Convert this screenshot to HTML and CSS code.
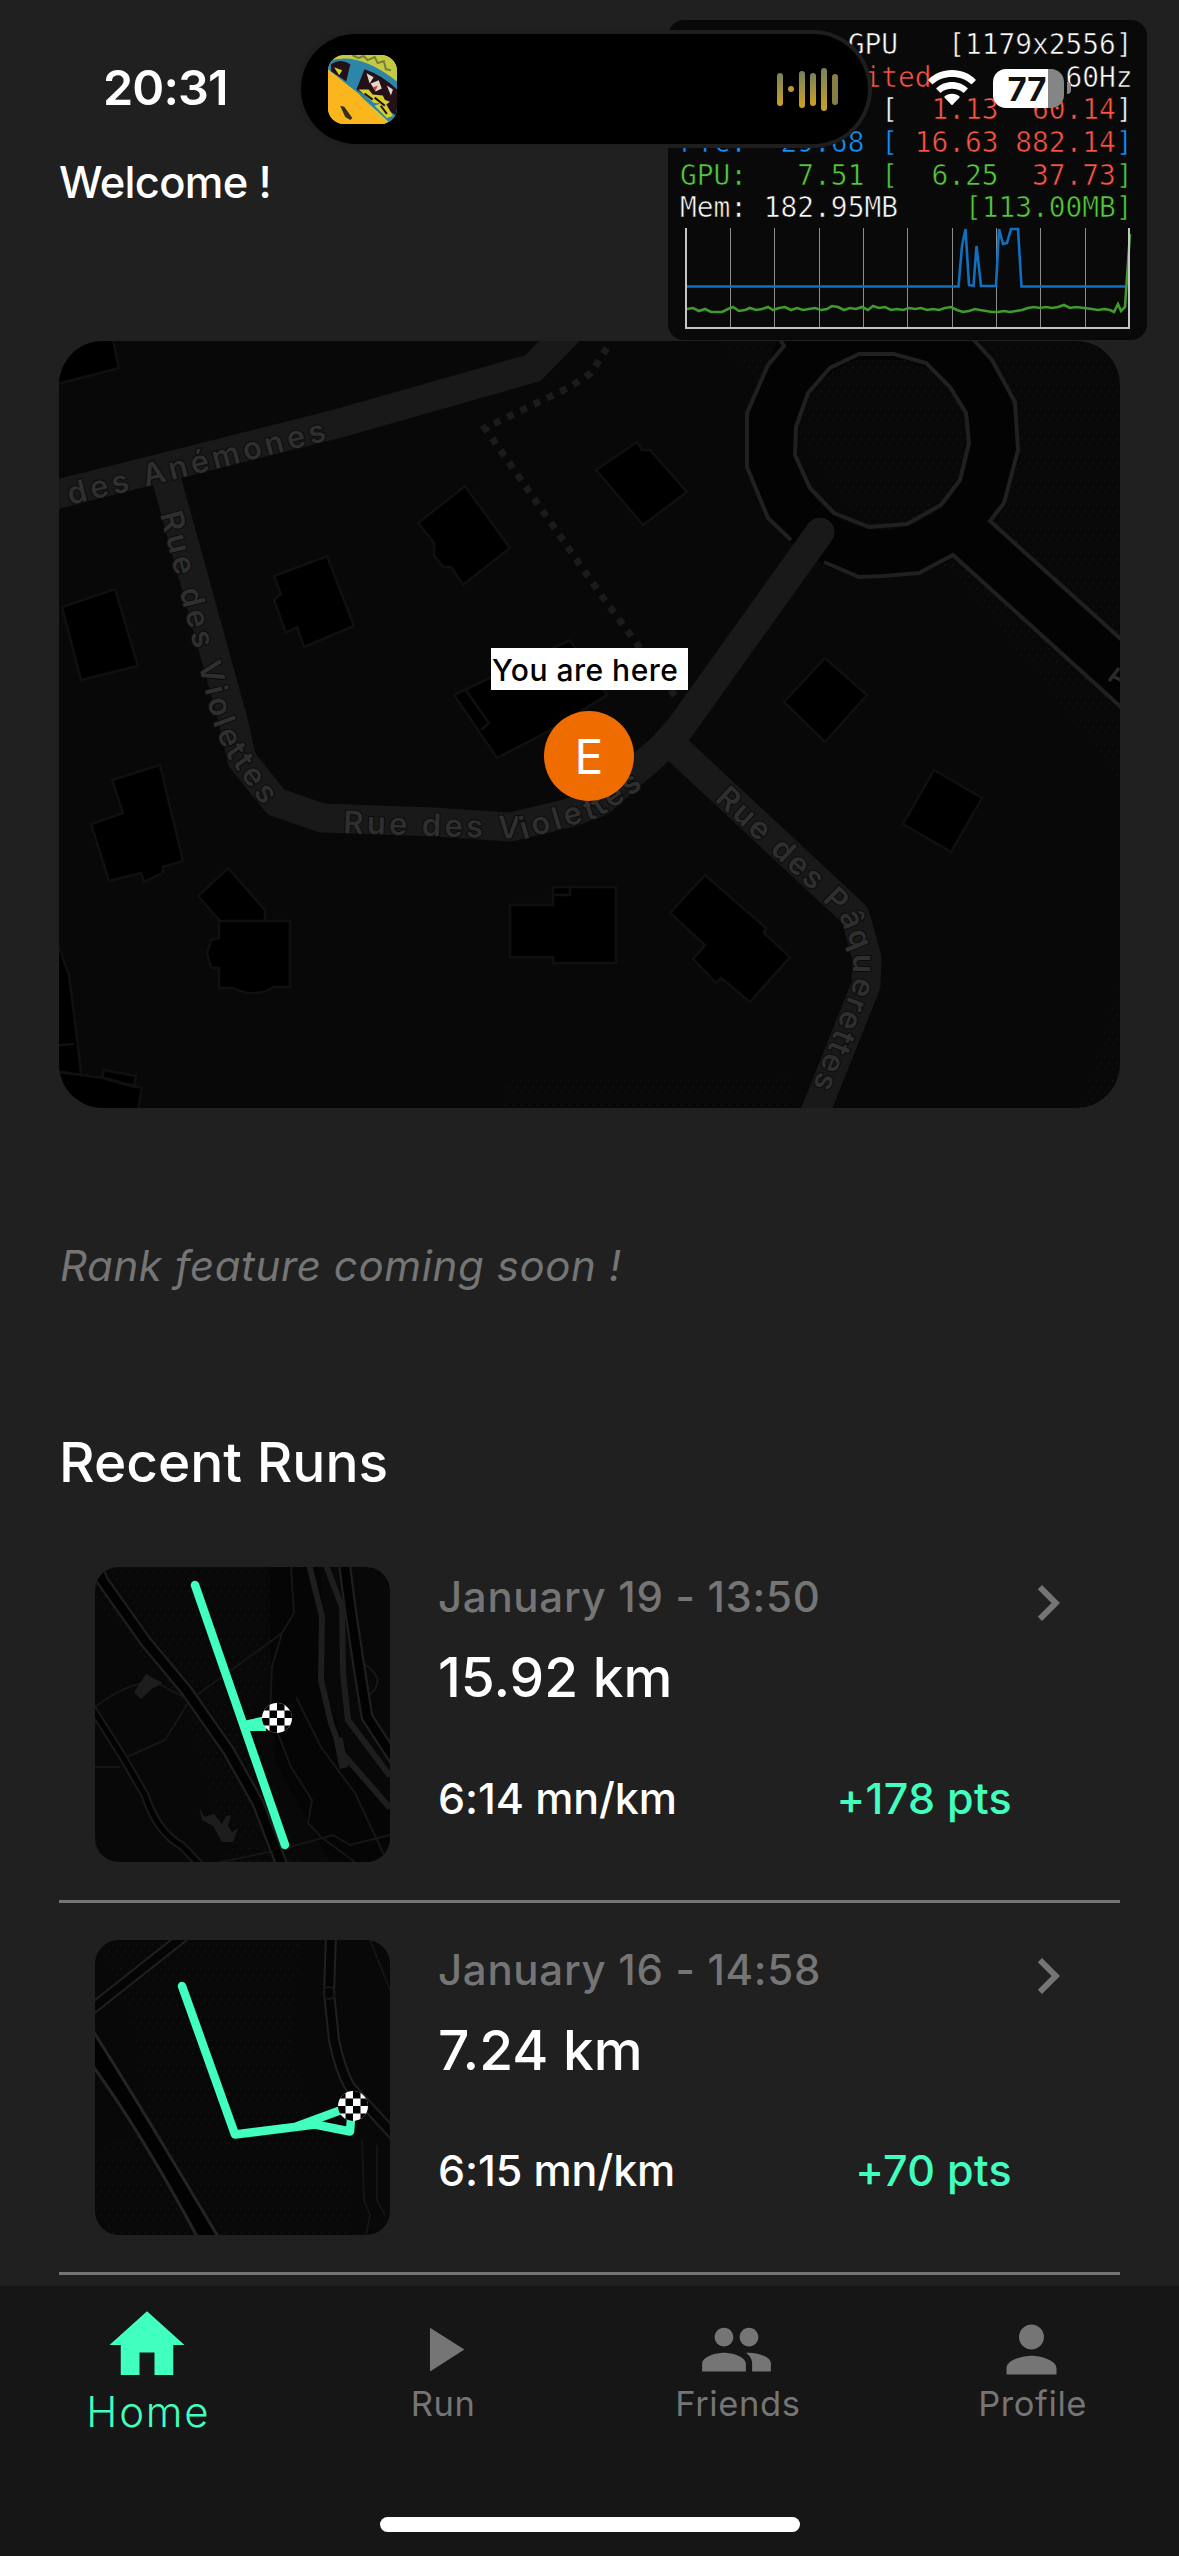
FILE: index.html
```
<!DOCTYPE html>
<html lang="en">
<head>
<meta charset="utf-8">
<title>Home</title>
<link rel="stylesheet" href="styles.css">
</head>
<body>
<svg class="defs" width="0" height="0" aria-hidden="true">
  <defs>
    <symbol id="finish" viewBox="0 0 30 30">
      <clipPath id="finish-clip"><circle cx="15" cy="15" r="15"/></clipPath>
      <g clip-path="url(#finish-clip)">
        <rect width="30" height="30" fill="#fff"/>
        <path fill="#000" d="M0 0h7.5v7.5H0zM15 0h7.5v7.5H15zM7.500 7.500h7.500v7.500H7.500zM22.500 7.500h7.500v7.500h-7.500zM0 15h7.500v7.500H0zM15 15h7.500v7.500H15zM7.500 22.500h7.500v7.500H7.500zM22.500 22.500h7.500v7.500h-7.500z"/>
      </g>
    </symbol>
    <pattern id="grain" width="8" height="12" patternUnits="userSpaceOnUse">
      <rect width="2" height="2" fill="#0e0e0e"/><rect x="4" y="6" width="2" height="2" fill="#0e0e0e"/>
    </pattern>
  </defs>
</svg>

<main class="content">
  <h1 class="welcome">Welcome !</h1>

  <section class="map">
    <svg class="map-art" viewBox="59 341 1061 767">
      <rect x="59" y="341" width="1061" height="767" fill="#080808"/>
      <path fill="url(#grain)" d="M720 341H1120V780L953 572L860 520L770 400ZM500 1108L510 1078L790 1075V1108ZM1120 980V1108H1080Z"/>
      <g fill="#000" stroke="#101010" stroke-width="2.500">
        <path d="M50 335L112 335L119 368L50 386Z"/>
        <path d="M62 607L115 589L138 666L81 680Z"/>
        <path d="M274 576L327 556L354 626L304 647L297 627L286 633L274 600L281 594Z"/>
        <path d="M418 523L465 486L510 548L463 585L451 567L443 567L434 555L434 543Z"/>
        <path d="M454 695L570 640L607 695L547 732L497 758Z"/>
        <path d="M465 689L489 723L481 730"/>
        <path d="M596 470L637 442L642 450L650 450L687 492L643 525Z"/>
        <path d="M784 702L825 658L867 695L825 742Z"/>
        <path d="M934 770L982 798L951 852L903 824Z"/>
        <path d="M705 875L766 928L764 933L790 957L750 1002L721 978L716 983L693 959L705 945L670 913Z"/>
        <path d="M510 905H553V887H616V963H553V957H510Z"/>
        <path d="M553 895H570V887"/>
        <path d="M112 780L160 765L183 861L163 867V873L144 882L141 873L109 881L91 824L123 813Z"/>
        <path d="M198 896L228 868L265 910V921H290V987H274Q254 999 233 988H219V968H211L207 953L211 940L219 938V920Z"/>
        <path d="M219 921H265"/>
        <path d="M50 930L59 947L69 975L78 1045L81 1075L50 1070ZM50 1046L74 1044"/>
        <path d="M50 1071L104 1078L142 1088L137 1115H50ZM104 1070L136 1076L134 1087L102 1078Z"/>
      </g>
      <circle cx="882" cy="443" r="111" fill="none" stroke="#030303" stroke-width="48"/>
      <path fill="#030303" d="M780 335H975L992 360H770ZM953 555L990 521L1125 642V711Z"/>
      <g fill="none" stroke="#202020" stroke-width="4">
        <path d="M859 354H894L926 363L950 387L966 413L969 443L960 480L941 505L907 524L869 527L834 513L810 488L795 455L796 427L808 393L830 368Z"/>
        <path d="M779 338L784 346L768 365L747 413V467L768 518L791 540M824 562L859 577L884 576L919 573L953 555L1123 709M972 338L992 360L1015 402L1018 450L1004 503L990 521L1123 641"/>
        <path d="M607 348L591 373L570 387L485 428L599 592L678 700" stroke="#1b1b1b" stroke-width="7" stroke-dasharray="7 7.700"/>
      </g>
      <g fill="none" stroke="#191919" stroke-width="29">
        <path d="M50 496L340 423L533 368L575 325"/>
        <path d="M164 470L233 720L242 760L276 802L322 818L433 822L511 827L569 813L600 802L662 748L680 728L820 532" stroke-linejoin="round" stroke-linecap="round"/>
        <path d="M665 738L855 915L867 958L866 985L812 1120" stroke-linejoin="round"/>
      </g>
      <path id="st1" fill="none" d="M70 505L145 487L360 432"/>
      <path id="st2" fill="none" d="M160 514L213 722L224 752L280 830"/>
      <path id="st3" fill="none" d="M343 833L525 839L600 817L680 762"/>
      <path id="st4" fill="none" d="M714 800L808 887L840 918L853 950L853 985L800 1118"/>
      <g class="street">
        <text class="s1"><textPath href="#st1">des Anémones</textPath></text>
        <text class="s2"><textPath href="#st2">Rue des Violettes</textPath></text>
        <text class="s3"><textPath href="#st3">Rue des Violettes</textPath></text>
        <text class="s4"><textPath href="#st4">Rue des Pâquerettes</textPath></text>
      </g>
      <path d="M1109 681L1119 668M1112 676L1121 680" stroke="#2b2b2b" stroke-width="3.500"/>
    </svg>
    <span class="map-label">You are here</span>
    <span class="map-pin">E</span>
  </section>

  <p class="rank">Rank feature coming soon !</p>

  <h2 class="heading">Recent Runs</h2>

  <section class="runs">
    <article class="run">
      <svg class="thumb" viewBox="95 1567 295 295">
        <rect x="95" y="1567" width="295" height="295" fill="#080808"/>
        <path fill="url(#grain)" d="M95 1567H270L280 1640L250 1720L300 1862H230L180 1700L95 1600Z"/>
        <path fill="#050505" d="M270 1567H320L325 1690L350 1760L390 1810V1862H330L275 1760L270 1640Z"/>
        <g fill="none" stroke="#161616" stroke-width="2">
          <path d="M95 1707Q144 1670 170 1690L190 1700L165 1740L127 1757M190 1700L282 1633L294 1613L291 1567M282 1633L272 1667L270 1713L291 1767L312 1800L308 1823L321 1837L355 1862M220 1862L279 1850L333 1835L350 1845L390 1835M296 1697L321 1747L355 1793L384 1855M363 1663Q390 1680 367 1697M95 1767H120"/>
        </g>
        <g fill="#1d1d1d">
          <path d="M146 1674L163 1683L153 1688L141 1699L134 1692ZM180 1694L188 1687V1700ZM95 1709L102 1721L95 1723Z"/>
          <path d="M199 1806L204 1817L214 1814L222 1824L226 1816L231 1815L228 1826L232 1832L238 1828L233 1842L222 1842L213 1826L202 1820Z"/>
        </g>
        <g fill="none" stroke="#1e1e1e">
          <path stroke-width="6" d="M308 1560L322 1617L321 1680L331 1723L342 1753L390 1808M324 1560L342 1607L343 1673L348 1720L390 1776"/>
          <path stroke-width="9" d="M338 1738L344 1768"/>
          <path stroke-width="13" d="M95 1560L102 1580L146 1642L186 1690L228 1750L258 1803L283 1868M344 1560L350 1607L359 1667L367 1717L395 1760"/>
          <path stroke-width="9" stroke="#191919" d="M90 1705L123 1757L145 1795Q157 1832 182 1846L203 1868"/>
        </g>
        <g fill="none" stroke="#020202">
          <path stroke-width="8.500" d="M95 1560L102 1580L146 1642L186 1690L228 1750L258 1803L283 1868M344 1560L350 1607L359 1667L367 1717L395 1760"/>
          <path stroke-width="5" d="M90 1705L123 1757L145 1795Q157 1832 182 1846L203 1868"/>
        </g>
        <path d="M195 1585L285 1845" class="route"/>
        <path fill="#40ffbf" d="M243 1721L266 1716V1731H246Z"/>
        <use href="#finish" x="262" y="1703" width="30" height="30"/>
      </svg>
      <div class="info">
        <p class="date">January 19 - 13:50</p>
        <p class="distance">15.92 km</p>
        <div class="stats"><span>6:14 mn/km</span><span class="points">+178 pts</span></div>
      </div>
      <svg class="chevron" viewBox="0 0 24 24"><path d="M10 6L8.590 7.410 13.170 12l-4.580 4.590L10 18l6-6z"/></svg>
    </article>

    <article class="run">
      <svg class="thumb" viewBox="95 1940 295 295">
        <rect x="95" y="1940" width="295" height="295" fill="#080808"/>
        <path fill="url(#grain)" d="M95 1940H300L290 2060L320 2120L350 2180V2235H95V2150L150 2130L130 2010Z"/>
        <g fill="none">
          <path stroke="#202020" stroke-width="12" d="M88 2012L184 1936M331 1935L329 1993L334 2040Q340 2070 350 2087L395 2136"/>
          <path stroke="#050505" stroke-width="8" d="M88 2012L184 1936M331 1935L329 1993L334 2040Q340 2070 350 2087L395 2136"/>
          <circle cx="329" cy="1993" r="6" stroke="#161616" stroke-width="2"/>
          <path stroke="#141414" stroke-width="2" d="M362 2140L364 2200L370 2215L365 2240M377 2145V2200L385 2215M370 1940L390 1990"/>
        </g>
        <path fill="#020202" stroke="#242424" stroke-width="3" d="M90 2026Q140 2105 220 2240H199Q140 2130 90 2062Z"/>
        <path d="M182 1986L235 2134.500L315 2124.500L350 2131.500L352 2106L295 2127" class="route"/>
        <use href="#finish" x="337" y="2091" width="32" height="30"/>
      </svg>
      <div class="info">
        <p class="date">January 16 - 14:58</p>
        <p class="distance">7.24 km</p>
        <div class="stats"><span>6:15 mn/km</span><span class="points">+70 pts</span></div>
      </div>
      <svg class="chevron" viewBox="0 0 24 24"><path d="M10 6L8.590 7.410 13.170 12l-4.580 4.590L10 18l6-6z"/></svg>
    </article>
  </section>
</main>

<nav class="tabs">
  <a class="tab active">
    <svg viewBox="0 0 24 24"><path d="M10 20v-6h4v6h5v-8h3L12 3 2 12h3v8z"/></svg>
    <span>Home</span>
  </a>
  <a class="tab">
    <svg viewBox="0 0 24 24"><path d="M8 5v14l11-7z"/></svg>
    <span>Run</span>
  </a>
  <a class="tab">
    <svg viewBox="0 0 24 24"><path d="M16 11c1.660 0 2.990-1.340 2.990-3S17.660 5 16 5s-3 1.340-3 3 1.340 3 3 3zm-8 0c1.660 0 2.990-1.340 2.990-3S9.660 5 8 5 5 6.340 5 8s1.340 3 3 3zm0 2c-2.330 0-7 1.170-7 3.500V19h14v-2.500C15 14.170 10.330 13 8 13zm8 0c-.29 0-.62.02-.97.05 1.160.84 1.970 1.970 1.970 3.450V19h6v-2.500c0-2.330-4.670-3.500-7-3.500z"/></svg>
    <span>Friends</span>
  </a>
  <a class="tab">
    <svg viewBox="0 0 24 24"><path d="M12 12c2.210 0 4-1.790 4-4s-1.790-4-4-4-4 1.790-4 4 1.790 4 4 4zm0 2c-2.670 0-8 1.340-8 4v2h16v-2c0-2.660-5.330-4-8-4z"/></svg>
    <span>Profile</span>
  </a>
  <i class="home-bar"></i>
</nav>

<aside class="hud">
  <pre class="hud-text">Apple A16 GPU   [1179x2556]
Metal <b class="r">unlimited</b>        60Hz
CPU:  16.88 [  <b class="r">1.13  60.14</b>]
<b class="b">FTC:  29.68 [</b> <b class="r">16.63 882.14</b><b class="b">]</b>
<b class="g">GPU:   7.51 [  6.25</b>  <b class="r">37.73</b><b class="g">]</b>
Mem: 182.95MB    <b class="g">[113.00MB]</b></pre>
  <svg class="hud-chart" viewBox="683 226 450 106">
    <path d="M730.500 228V327M774.500 228V327M819.500 228V327M863.500 228V327M907.500 228V327M952.500 228V327M996.500 228V327M1040.500 228V327M1085.500 228V327" stroke="#8c8c8c" fill="none"/>
    <g fill="none" stroke-width="2.600">
      <path stroke="#429a2f" d="M687 309l6-1 6 3 6-2 6 3h11l6-3 5-2 6 4 6-1 5-2 6 2 6-1 6-2 5 3 6-2 6-1 6 3 6-2 6 2 6-1 6-1 6 2 6-1 5-3 6 1 6 3 6-2 6 1 6-2 6 3 5-4 6 2 6-1 6 3 6-1 6 1 6-2 6 1 6-1 6 2 6-1 6 1 6-2 6-1 6 3 6 2 6-1 6-2 5 1 6 1 6 1h6l6-1 6 1 6-1 6-1 6-2 6-1 6 1 6-1 6 1 6-1 6-2 6 3 6-1L1092 309L1098 310L1104 309L1110 310L1114 312L1118 304L1121 311L1125 307L1127.500 270L1130 234"/>
      <path stroke="#1070c0" d="M687 286.500H958.500L962 246L965.500 229L969 285L973.500 286L976.500 246L981 286H996L999 229L1003 244L1007 243L1011 229H1018L1021.500 286.500H1125"/>
    </g>
    <path d="M686 228V328H1129V228" stroke="#c4c4c4" stroke-width="2" fill="none"/>
  </svg>
</aside>

<div class="island">
  <svg class="cover" viewBox="0 0 68 68">
    <rect width="68" height="68" fill="#d8c838"/>
    <path d="M14 0H68V24Q45 6 14 4Z" fill="#c3c944"/>
    <path d="M24 0l6 3 5-2 4 4 7-3 3 6 6-2 2 8 5 1" stroke="#77802c" stroke-width="2" fill="none"/>
    <path d="M0 6Q30 -4 68 26V68H62Q20 28 0 18Z" fill="#2b86a8"/>
    <path d="M3 9Q12 3 22 9L18 26L3 16ZM36 14Q54 20 68 34V60L28 34Z" fill="#241018"/>
    <path d="M38 18l7 4-4 6zM42 28l8-3 3 8-6 3zM58 30l6 4-2 6z" fill="#e4d5c6"/>
    <path d="M30 34l10 0 4 5 10 1 2 4 5 2-4 3-12-2zM46 50l10-4 8 14-6 2zM6 12l8 3-3 5z" fill="#d6d12a"/>
    <path d="M36 38l8 6M46 42l10 8M52 50l6 8M60 48l5 8" stroke="#241018" stroke-width="2"/>
    <path d="M44 32l5-2-2 5z" fill="#d83a46"/>
    <path d="M0 14L30 38L58 68H0Z" fill="#fbb51d"/>
    <path d="M12 50l4 1 8 11-2 2-5-3z" fill="#33301f"/>
  </svg>
  <svg class="wave" viewBox="0 0 62 44">
    <defs><linearGradient id="wg" x1="0" y1="0" x2="0.100" y2="1"><stop offset="0" stop-color="#73805e"/><stop offset="1" stop-color="#c9a024"/></linearGradient></defs>
    <g fill="url(#wg)">
      <rect x="0" y="6" width="6" height="33" rx="3"/><rect x="11" y="19" width="6" height="6" rx="3" fill="#b89a35"/><rect x="22" y="4" width="6" height="37" rx="3"/><rect x="33" y="6" width="6" height="33" rx="3"/><rect x="44" y="1" width="6" height="43" rx="3"/><rect x="55" y="7" width="6" height="31" rx="3" fill="#857f45"/>
    </g>
  </svg>
</div>
<div class="clock">20:31</div>
<div class="status">
  <svg class="wifi" viewBox="0 0 48 36">
    <path fill="#fff" d="M24 0C33.500 0 41.500 3.500 47.500 9.500Q48 10 47.500 10.600L44 14Q43.500 14.500 43 14C38 9.500 31.500 7 24 7S10 9.500 5 14Q4.500 14.500 4 14L.5 10.600Q0 10 .5 9.500C6.500 3.500 14.500 0 24 0ZM24 12C30 12 35.500 14.200 39.500 18Q40 18.500 39.500 19L36 22.500Q35.500 23 35 22.500C32 20 28.500 18.800 24 18.800S16 20 13 22.500Q12.500 23 12 22.500L8.500 19Q8 18.500 8.500 18C12.500 14.200 18 12 24 12ZM24 23.800C27 23.800 29.500 24.800 31.500 26.500Q32 27 31.500 27.600L24.600 34.800Q24 35.300 23.400 34.800L16.500 27.600Q16 27 16.500 26.500C18.500 24.800 21 23.800 24 23.800Z"/>
  </svg>
  <div class="battery">77</div>
  <i class="nub"></i>
</div>
</body>
</html>
```
FILE: styles.css
```
* { box-sizing: border-box; }
body {
  position: relative;
  display: flex;
  flex-direction: column;
  width: 1179px;
  height: 2556px;
  margin: 0;
  overflow: hidden;
  background: #202020;
  color: #fff;
  font-family: Inter, "Liberation Sans", sans-serif;
}
h1, h2, p, pre { margin: 0; }
.defs { position: absolute; }

.content {
  flex: none;
  height: 2286px;
  padding: 155px 59px 0;
  overflow: hidden;
}
.welcome { font-size: 43.500px; font-weight: 500; line-height: 54px; letter-spacing: -0.700px; }

.map {
  position: relative;
  width: 1061px;
  height: 767px;
  margin-top: 132px;
  border-radius: 44px;
  overflow: hidden;
}
.map-art { display: block; width: 100%; height: 100%; }
.street { font: 600 31px Inter, sans-serif; fill: #2f2f2f; stroke: #0c0c0c; stroke-width: 2px; paint-order: stroke; }
.s1 { letter-spacing: 3.800px; }
.s2 { letter-spacing: 3.300px; }
.s3 { letter-spacing: 3.300px; }
.s4 { letter-spacing: 2.400px; }
.map-label {
  position: absolute;
  left: 432px;
  top: 307px;
  width: 197px;
  height: 42px;
  padding-left: 1px;
  background: #fff;
  color: #000;
  font-size: 30px;
  font-weight: 450;
  line-height: 44px;
  letter-spacing: 0.500px;
  white-space: nowrap;
}
.map-pin {
  position: absolute;
  left: 485px;
  top: 370px;
  width: 90px;
  height: 90px;
  border-radius: 50%;
  background: #ef6c00;
  font-size: 48px;
  line-height: 91px;
  text-align: center;
}

.rank {
  margin-top: 132px;
  padding-left: 1px;
  color: #757575;
  font-size: 42px;
  font-style: italic;
  line-height: 52px;
  letter-spacing: 0.600px;
}
.heading { margin-top: 136px; font-size: 55px; font-weight: 500; line-height: 68px; }

.runs { margin-top: 34px; }
.run {
  display: flex;
  height: 372.500px;
  padding: 37px 36px 0;
  border-bottom: 3px solid #757575;
}
.thumb { flex: none; width: 295px; height: 295px; border-radius: 24px; }
.route { fill: none; stroke: #40ffbf; stroke-width: 8.500px; stroke-linecap: round; stroke-linejoin: round; }
.info { flex: 1; padding: 4.400px 0 0 48px; font-weight: 500; }
.date { color: #757575; font-size: 42px; line-height: 52px; letter-spacing: 0.700px; }
.distance { margin-top: 21px; font-size: 55px; line-height: 66px; }
.stats { display: flex; justify-content: space-between; margin-top: 61.500px; font-size: 43px; line-height: 52px; letter-spacing: -0.100px; }
.points { color: #40ffbf; letter-spacing: 0.300px; }
.chevron { flex: none; width: 72px; height: 72px; fill: #757575; }

.tabs {
  position: relative;
  display: grid;
  grid-template-columns: repeat(4, 1fr);
  height: 270px;
  background: #161616;
}
.tab {
  display: flex;
  flex-direction: column;
  align-items: center;
  padding-top: 26px;
  color: #757575;
  font-size: 34.500px;
  line-height: 42px;
  letter-spacing: 0.600px;
}
.tab svg { width: 75px; height: 75px; fill: currentColor; }
.tab span { margin-top: -4px; padding-left: 2px; }
.tab.active { padding-top: 14px; color: #40ffbf; font-size: 42px; font-weight: 300; line-height: 50px; letter-spacing: 1.800px; }
.tab.active svg { width: 90px; height: 90px; }
.tab.active span { margin-top: -3px; }
.home-bar {
  position: absolute;
  left: 380px;
  bottom: 24px;
  width: 420px;
  height: 15px;
  border-radius: 8px;
  background: #fff;
}

.hud {
  position: absolute;
  left: 668px;
  top: 20px;
  width: 479px;
  height: 320px;
  padding: 9px 0 0 12px;
  border-radius: 16px;
  background: #090909;
}
.hud-text { font: 27.850px/32.650px "DejaVu Sans Mono", monospace; -webkit-text-stroke: 0.600px #090909; }
.hud-text b { font-weight: 400; }
.r { color: #ff5544; }
.g { color: #55cc3c; }
.b { color: #1496ff; }
.hud-chart { position: absolute; left: 15px; top: 206px; width: 450px; height: 106px; }

.island {
  position: absolute;
  left: 301px;
  top: 34px;
  display: flex;
  align-items: center;
  justify-content: space-between;
  width: 567px;
  height: 110px;
  padding: 0 29px 0 27px;
  border-radius: 55px;
  background: #000;
  box-shadow: 0 0 0 4px #1e1e1e;
}
.cover { width: 69px; height: 69px; border-radius: 16px; }
.wave { width: 62px; height: 44px; }
.clock {
  position: absolute;
  left: 103px;
  top: 58px;
  font-size: 48.500px;
  font-weight: 600;
  line-height: 60px;
  letter-spacing: -0.900px;
}
.status { position: absolute; left: 928px; top: 68px; display: flex; align-items: center; height: 40px; }
.wifi { width: 48px; height: 36px; }
.battery {
  width: 71px;
  height: 39px;
  margin-left: 17px;
  padding-right: 3px;
  border-radius: 13px;
  background: linear-gradient(90deg, #fff 55px, #858585 55px);
  color: #111;
  font-size: 33px;
  font-weight: 700;
  line-height: 40px;
  text-align: center;
}
.nub { width: 4px; height: 12px; margin-left: 3px; border-radius: 0 4px 4px 0; background: #858585; }
```
